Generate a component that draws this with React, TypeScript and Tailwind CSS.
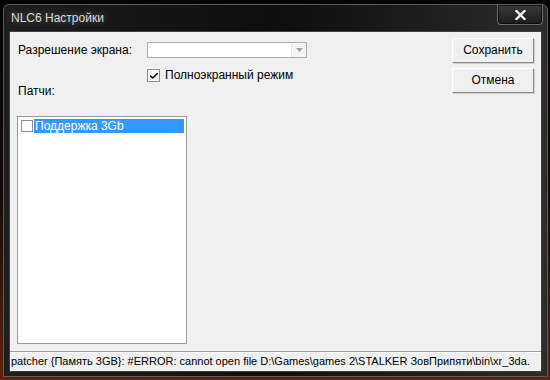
import { Check } from "lucide-react";

const STATUS =
  "patcher {Память 3GB}: #ERROR: cannot open file D:\\Games\\games 2\\STALKER ЗовПрипяти\\bin\\xr_3da.";

function CloseButton() {
  return (
    <div className="absolute right-[-1px] top-0 flex h-[20px] w-[46px] items-center justify-center rounded-b-[4px] border border-t-0 border-[#6a6a6a] bg-gradient-to-b from-[#3a3a3a] to-[#1c1c1c] shadow-[inset_0_0_0_1px_rgba(0,0,0,0.6)]">
      <svg width="11" height="10" viewBox="0 0 11 10">
        <path d="M1.5 1 L9.5 9 M9.5 1 L1.5 9" stroke="#f2f2f2" strokeWidth="2.4" strokeLinecap="square" />
      </svg>
    </div>
  );
}

function Button({ label }: { label: string }) {
  return (
    <div className="flex h-[25px] w-[82px] items-center justify-center border border-t-white border-l-white border-r-[#8a8a8a] border-b-[#8a8a8a] bg-[#f0f0f0] shadow-[1px_1px_0_#d0d0d0]">
      {label}
    </div>
  );
}

export default function App() {
  return (
    <div className="relative h-[380px] w-[550px] overflow-hidden bg-gradient-to-b from-[#050505] via-[#120a08] to-[#5a2410] font-['Liberation_Sans',sans-serif] text-[12px] leading-[15px] text-black">
      <div className="absolute left-[3px] top-[4px] flex h-[373px] w-[545px] flex-col rounded-t-[6px] border border-[#5a5a5a] bg-gradient-to-r from-[#1e1e1e] via-[#0e0e0e] to-[#2c2c2c] px-[5px] pb-[4px]">
        <div className="relative h-[26px] shrink-0">
          <span className="absolute left-[2px] top-[6px] text-[12px] text-[#d8d8d8] [text-shadow:0_0_6px_rgba(255,255,255,0.35)]">
            NLC6 Настройки
          </span>
          <CloseButton />
        </div>

        <div className="flex flex-1 flex-col border border-[#404040] bg-[#f0f0f0]">
          <div className="flex flex-1">
            <div className="flex flex-col pl-[8px] pt-[10px]">
              <div className="flex h-[16px] items-center">
                <span className="w-[129px]">Разрешение экрана:</span>
                <div className="flex h-[16px] w-[160px] border border-[#abadb3] bg-white">
                  <div className="flex-1" />
                  <div className="flex w-[15px] items-center justify-center border-l border-[#e3e3e3] bg-[#f4f4f4]">
                    <svg width="7" height="4" viewBox="0 0 7 4">
                      <path d="M0 0 L7 0 L3.5 4 Z" fill="#a0a0a0" />
                    </svg>
                  </div>
                </div>
              </div>

              <div className="mt-[10px] flex items-center pl-[129px]">
                <div className="flex h-[13px] w-[13px] items-center justify-center border border-[#8f8f8f] bg-white">
                  <Check size={10} strokeWidth={3.5} className="text-black" />
                </div>
                <span className="ml-[5px]">Полноэкранный режим</span>
              </div>

              <span className="mt-[1px]">Патчи:</span>

              <div className="ml-[-1px] mt-[17px] h-[228px] w-[170px] border border-[#9a9a9a] bg-white p-[2px]">
                <div className="flex h-[14px] items-center">
                  <div className="ml-[1px] h-[12px] w-[12px] border border-[#8f8f8f] bg-white" />
                  <div className="ml-[1px] flex h-[14px] flex-1 items-center bg-[#3399ff] pl-[1px] text-white">
                    Поддержка 3Gb
                  </div>
                </div>
              </div>
            </div>

            <div className="ml-auto flex flex-col gap-[5px] pr-[7px] pt-[6px]">
              <Button label="Сохранить" />
              <Button label="Отмена" />
            </div>
          </div>

          <div className="flex h-[20px] shrink-0 items-center overflow-hidden whitespace-nowrap border-t border-[#a0a0a0] pl-[1px] text-[11px] shadow-[inset_0_1px_0_#ffffff]">
            {STATUS}
          </div>
        </div>
      </div>
    </div>
  );
}
